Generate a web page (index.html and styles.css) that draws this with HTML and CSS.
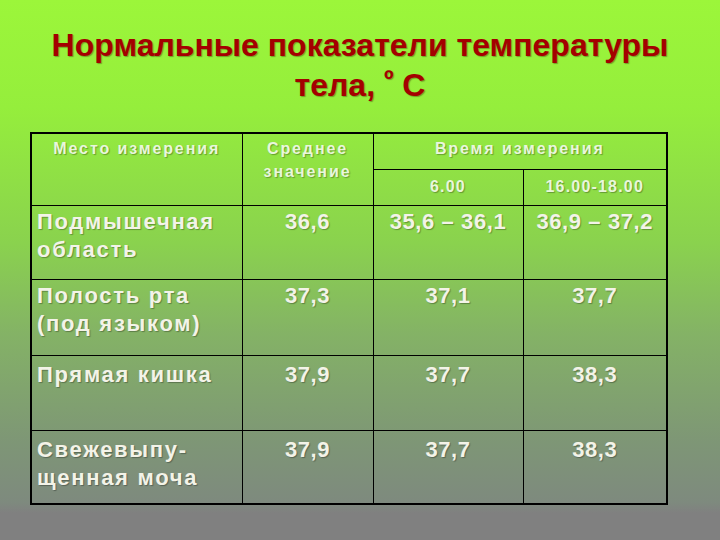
FILE: index.html
```html
<!DOCTYPE html>
<html lang="ru">
<head>
<meta charset="utf-8">
<title>Нормальные показатели температуры тела</title>
<link rel="stylesheet" href="styles.css">
</head>
<body>
<div class="slide">
  <h1 class="title">Нормальные показатели температуры<br>тела, <span class="deg">º</span> С</h1>
  <table class="temps">
    <colgroup>
      <col class="c1"><col class="c2"><col class="c3"><col class="c4">
    </colgroup>
    <thead>
      <tr class="h1">
        <th rowspan="2" class="hd">Место измерения</th>
        <th rowspan="2" class="hd">Среднее значение</th>
        <th colspan="2" class="hd">Время измерения</th>
      </tr>
      <tr class="h2">
        <th class="hd">6.00</th>
        <th class="hd">16.00-18.00</th>
      </tr>
    </thead>
    <tbody>
      <tr class="r1">
        <td class="place">Подмышечная область</td>
        <td class="num">36,6</td>
        <td class="num">35,6 – 36,1</td>
        <td class="num">36,9 – 37,2</td>
      </tr>
      <tr class="r2">
        <td class="place">Полость рта (под языком)</td>
        <td class="num">37,3</td>
        <td class="num">37,1</td>
        <td class="num">37,7</td>
      </tr>
      <tr class="r3">
        <td class="place">Прямая кишка</td>
        <td class="num">37,9</td>
        <td class="num">37,7</td>
        <td class="num">38,3</td>
      </tr>
      <tr class="r4">
        <td class="place">Свежевыпу-<br>щенная моча</td>
        <td class="num">37,9</td>
        <td class="num">37,7</td>
        <td class="num">38,3</td>
      </tr>
    </tbody>
  </table>
</div>
</body>
</html>
```
FILE: styles.css
```css
html, body {
  margin: 0;
  padding: 0;
}
body {
  width: 720px;
  height: 540px;
  overflow: hidden;
  font-family: "Liberation Sans", Arial, sans-serif;
}
.slide {
  width: 720px;
  height: 540px;
  box-sizing: border-box;
  padding-top: 25px;
  background: linear-gradient(to bottom,
    #9cf63a 0%,
    #95ee3c 20%,
    #8ad24e 45%,
    #84b266 62%,
    #7e9676 82%,
    #7e8a7e 93%,
    #808080 95%,
    #808080 100%);
}
.title {
  margin: 0;
  font-size: 32px;
  line-height: 40px;
  font-weight: bold;
  text-align: center;
  color: #a40000;
  text-shadow: 1px 1px 1px rgba(60, 40, 0, 0.4);
}
.deg {
  font-size: 26px;
  vertical-align: 8px;
  line-height: 0;
}
.temps {
  margin: 27px 0 0 30px;
  width: 636px;
  table-layout: fixed;
  border-collapse: collapse;
  border: 2px solid #000;
  color: #f3f3e8;
  text-shadow: 1px 1px 1px rgba(0, 0, 0, 0.3);
}
.c1 { width: 211px; }
.c2 { width: 131px; }
.c3 { width: 150px; }
.c4 { width: 144px; }
.temps th, .temps td {
  border: 1px solid #000;
  padding: 0;
  vertical-align: top;
  text-align: center;
}
.hd {
  font-size: 16px;
  line-height: 23px;
  font-weight: bold;
  letter-spacing: 1.9px;
  color: #e9f6dc;
  padding-top: 3px !important;
}
.h1 { height: 36px; }
.h2 { height: 36px; }
.h2 .hd { padding-top: 5px !important; letter-spacing: 1.2px; }
.temps td {
  font-size: 22px;
  line-height: 28px;
  font-weight: bold;
  letter-spacing: 1.7px;
  padding-top: 2px;
}
.temps td.place {
  text-align: left;
  padding-left: 5px;
}
.temps td.num {
  letter-spacing: 0.6px;
}
.r1 { height: 74px; }
.r2 { height: 76px; }
.r3 { height: 75px; }
.r4 { height: 74px; }
.r3 td, .r4 td { padding-top: 5px; }
```
